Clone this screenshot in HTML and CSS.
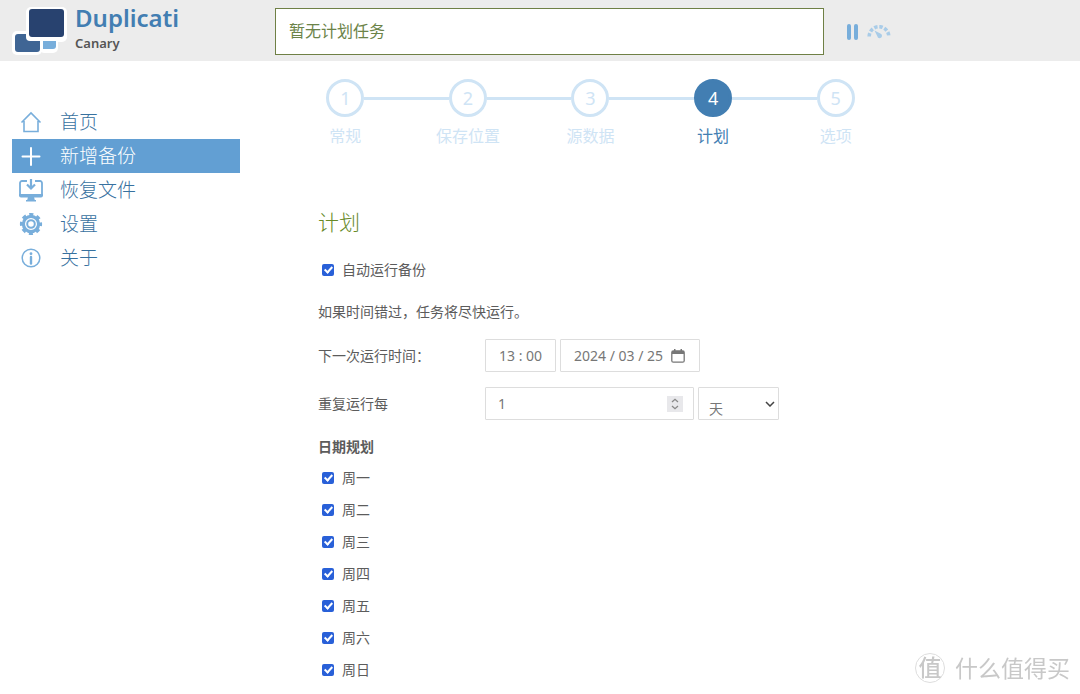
FILE: index.html
```html
<!DOCTYPE html>
<html lang="zh-CN">
<head>
<meta charset="utf-8">
<meta name="viewport" content="width=device-width, initial-scale=1">
<title>Duplicati</title>
<link rel="stylesheet" href="styles.css">
</head>
<body>
<header class="topbar">
  <a class="brand" href="#">
    <svg class="brand-logo" viewBox="0 0 56 50" aria-hidden="true">
      <g fill="#fff"><rect x="0" y="24" width="30" height="24" rx="5"/><rect x="27" y="27" width="19" height="19" rx="5"/><rect x="14" y="0" width="41" height="35" rx="5"/></g>
      <rect x="3" y="27" width="25" height="18" rx="3" fill="#3f6594"/>
      <path d="M31 29h13v10a3 3 0 0 1-3 3H31z" fill="#78aedb"/>
      <rect x="14" y="20" width="40" height="14" rx="4" fill="#fff"/>
      <rect x="17" y="2" width="35" height="28" rx="3" fill="#28426f"/>
    </svg>
    <span class="brand-text"><span class="brand-name">Duplicati</span><span class="brand-channel">Canary</span></span>
  </a>
  <div class="status">暂无计划任务</div>
  <div class="controls">
    <button class="icon-button" type="button" aria-label="暂停">
      <svg width="12" height="16" viewBox="0 0 12 16"><rect x="0" y="0" width="4" height="16" rx="2" fill="#78aedb"/><rect x="7" y="0" width="4" height="16" rx="2" fill="#78aedb"/></svg>
    </button>
    <button class="icon-button" type="button" aria-label="限速">
      <svg width="24" height="14" viewBox="0 0 24 14"><path d="M2.200 11.500A9.600 9.600 0 0 1 21.800 11.500" fill="none" stroke="#a9cce8" stroke-width="3.600" stroke-dasharray="3.400 1.800"/><path d="M7.500 5.500l5.800 3a2.400 2.400 0 1 1-3 2.800z" fill="#a9cce8"/></svg>
    </button>
  </div>
</header>
<div class="page">
  <nav class="menu">
    <a class="menu-item" href="#"><svg class="menu-icon" viewBox="0 0 26 26"><path d="M3.500 13.500L13 4l9.500 9.500M6 12v10.500h14V12" fill="none" stroke="#78aedb" stroke-width="1.600"/></svg>首页</a>
    <a class="menu-item active" href="#"><svg class="menu-icon" viewBox="0 0 26 26"><path d="M13 5v17M4.500 13.500h17" stroke="#fff" stroke-width="2" stroke-linecap="round"/></svg>新增备份</a>
    <a class="menu-item" href="#"><svg class="menu-icon" viewBox="0 0 26 26"><path d="M9 4H4a2 2 0 0 0-2 2v12h22V6a2 2 0 0 0-2-2h-5" fill="none" stroke="#78aedb" stroke-width="1.800"/><path d="M1 17h24v1.500a2 2 0 0 1-2 2H3a2 2 0 0 1-2-2zM10 20h6l.8 3H18v1.500H8V23h1.200z" fill="#78aedb"/><path d="M13 2v9M9 7.500l4 4 4-4" fill="none" stroke="#78aedb" stroke-width="2.200"/></svg>恢复文件</a>
    <a class="menu-item" href="#"><svg class="menu-icon" viewBox="0 0 26 26"><circle cx="13" cy="13" r="7.600" fill="none" stroke="#78aedb" stroke-width="3.200"/><circle cx="13" cy="13" r="9.600" fill="none" stroke="#78aedb" stroke-width="3" stroke-dasharray="4.040 3.500" stroke-dashoffset="2.020"/><circle cx="13" cy="13" r="3.800" fill="none" stroke="#78aedb" stroke-width="2"/></svg>设置</a>
    <a class="menu-item" href="#"><svg class="menu-icon" viewBox="0 0 26 26"><circle cx="13" cy="13" r="8.800" fill="none" stroke="#78aedb" stroke-width="1.500"/><circle cx="13" cy="8.700" r="1.400" fill="#78aedb"/><path d="M13 12v6.500" stroke="#78aedb" stroke-width="2.400" stroke-linecap="round"/></svg>关于</a>
  </nav>
  <main class="content">
    <ol class="steps">
      <li class="step"><span class="step-number">1</span><span class="step-label">常规</span></li>
      <li class="step"><span class="step-number">2</span><span class="step-label">保存位置</span></li>
      <li class="step"><span class="step-number">3</span><span class="step-label">源数据</span></li>
      <li class="step current"><span class="step-number">4</span><span class="step-label">计划</span></li>
      <li class="step"><span class="step-number">5</span><span class="step-label">选项</span></li>
    </ol>
    <form class="schedule">
      <h1 class="title">计划</h1>
      <label class="check auto"><input class="tick" type="checkbox" checked>自动运行备份</label>
      <p class="hint">如果时间错过，任务将尽快运行。</p>
      <div class="row">
        <label class="row-label" for="time">下一次运行时间：</label>
        <div class="fields">
          <input class="field time" id="time" type="text" value="13 : 00">
          <span class="field date">
            <input class="bare" type="text" aria-label="日期" value="2024 / 03 / 25">
            <button class="icon-button" type="button" aria-label="选择日期"><svg width="14" height="14" viewBox="0 0 14 14"><rect x=".8" y="2" width="12.400" height="11.200" rx="1.500" fill="none" stroke="#777" stroke-width="1.300"/><path d="M1 2h12v3H1zM3 0h1.500v2H3zM9.500 0H11v2H9.500z" fill="#777"/></svg></button>
          </span>
        </div>
      </div>
      <div class="row">
        <label class="row-label" for="repeat">重复运行每</label>
        <div class="fields">
          <span class="field repeat">
            <input class="bare" id="repeat" type="number" value="1">
            <button class="spinner" type="button" aria-label="调整数值"><svg width="10" height="12" viewBox="0 0 10 12"><path d="M2 4l3-2.700L8 4M2 8l3 2.700L8 8" fill="none" stroke="#888" stroke-width="1.300"/></svg></button>
          </span>
          <span class="select-wrap">
            <select class="field unit" aria-label="单位"><option>天</option></select>
            <svg class="chevron" width="10" height="6" viewBox="0 0 10 6"><path d="M1 1l4 4 4-4" fill="none" stroke="#444" stroke-width="1.500"/></svg>
          </span>
        </div>
      </div>
      <fieldset class="days">
        <legend class="days-title">日期规划</legend>
        <label class="check"><input class="tick" type="checkbox" checked>周一</label>
        <label class="check"><input class="tick" type="checkbox" checked>周二</label>
        <label class="check"><input class="tick" type="checkbox" checked>周三</label>
        <label class="check"><input class="tick" type="checkbox" checked>周四</label>
        <label class="check"><input class="tick" type="checkbox" checked>周五</label>
        <label class="check"><input class="tick" type="checkbox" checked>周六</label>
        <label class="check"><input class="tick" type="checkbox" checked>周日</label>
      </fieldset>
    </form>
  </main>
</div>
<div class="watermark"><span class="watermark-badge">值</span>什么值得买</div>
</body>
</html>
```
FILE: styles.css
```css
*, *::before, *::after { box-sizing: border-box; }
body {
  margin: 0;
  background: #fff;
  color: #5c5c5c;
  font: 14px/20px "Noto Sans", "Noto Sans CJK SC", sans-serif;
}
a { color: inherit; text-decoration: none; }
.topbar {
  display: flex;
  align-items: center;
  height: 61px;
  padding: 2px 12px 0;
  background: #ececec;
}
.brand { display: flex; gap: 7px; width: 263px; }
.brand-logo { width: 56px; height: 50px; }
.brand-text { display: flex; flex-direction: column; font-weight: 600; }
.brand-name { color: #427eb2; font-size: 24px; line-height: 22px; }
.brand-channel { color: #555; font-size: 13px; line-height: 28px; }
.status {
  flex: 0 1 549px;
  height: 47px;
  padding: 0 13px;
  border: 1px solid #6f8045;
  background: #fff;
  color: #6b8348;
  font-size: 16px;
  line-height: 44px;
}
.controls { display: flex; align-items: center; gap: 8px; padding-left: 23px; }
.icon-button { display: flex; padding: 0; border: 0; background: none; }
.page { display: flex; padding: 0 12px; }
.menu { width: 228px; padding-top: 44px; }
.menu-item {
  display: flex;
  align-items: center;
  gap: 16px;
  height: 34px;
  padding-left: 6px;
  color: #37719f;
  font-size: 19px;
  font-weight: 300;
}
.menu-item.active { background: #629fd3; color: #fff; }
.menu-icon { width: 26px; height: 26px; }
.content { flex: 1; padding: 18px 0 0 44px; }
.steps {
  display: grid;
  grid-template-columns: repeat(5, 1fr);
  max-width: 613px;
  margin: 0;
  padding: 0;
  list-style: none;
}
.step {
  display: grid;
  grid-template-columns: 1fr 38px 1fr;
  align-items: center;
  row-gap: 9px;
  color: #cfe4f5;
  font-size: 16px;
  text-align: center;
}
.step::before, .step::after { content: ""; grid-row: 1; height: 3px; background: #cfe4f5; }
.step::before { grid-column: 1; }
.step::after { grid-column: 3; }
.step:first-child::before, .step:last-child::after { background: none; }
.step-number {
  grid-column: 2;
  grid-row: 1;
  height: 38px;
  border: 3px solid #cfe4f5;
  border-radius: 50%;
  font-size: 18px;
  line-height: 32px;
}
.step-label { grid-column: 1 / -1; grid-row: 2; }
.current { color: #427eb2; }
.current .step-number { border-color: #427eb2; background: #427eb2; color: #fff; }
.schedule { padding: 62px 0 0 34px; }
.title { margin: 0; color: #688a28; font-size: 21px; font-weight: 300; line-height: 28px; }
.check { display: flex; align-items: center; gap: 8px; padding-left: 4px; }
.auto { margin-top: 24px; }
.tick {
  width: 12px;
  height: 12px;
  margin: 0;
  appearance: none;
  border-radius: 2px;
  background: #2960d8;
}
.tick:checked::after {
  content: "";
  display: block;
  width: 5px;
  height: 8px;
  margin: 1px 0 0 4px;
  border: solid #fff;
  border-width: 0 2px 2px 0;
  transform: rotate(42deg);
}
.hint { margin: 22px 0 17px; }
.row { display: flex; align-items: center; margin-bottom: 15px; }
.row-label { width: 167px; }
.fields { display: flex; gap: 4px; }
.field {
  display: flex;
  align-items: center;
  height: 33px;
  padding: 0 14px;
  border: 1px solid #ddd;
  border-radius: 1px;
  background: #fff;
  color: #777;
  font: inherit;
}
.time { width: 71px; padding: 0 10px 0 13px; }
.date { width: 140px; padding: 0 14px 0 13px; }
.repeat { width: 209px; padding: 0 10px 0 12px; }
.bare {
  flex: 1;
  min-width: 0;
  padding: 0;
  border: 0;
  background: none;
  color: inherit;
  font: inherit;
  appearance: textfield;
}
.bare::-webkit-inner-spin-button { appearance: none; }
.spinner { display: flex; padding: 2px 3px; border: 0; background: #e8e8eb; }
.select-wrap { position: relative; }
.unit { width: 81px; padding: 10px 10px 0; appearance: none; }
.chevron { position: absolute; right: 4px; top: 14px; pointer-events: none; }
.days { display: grid; gap: 12px; margin: 17px 0 0; padding: 0; border: 0; }
.days-title { padding: 0; margin-bottom: 11px; font-weight: 700; }
.watermark {
  position: fixed;
  right: 10px;
  bottom: 10px;
  display: flex;
  align-items: center;
  gap: 10px;
  color: #c8c8c8;
  font-size: 23px;
  line-height: 32px;
}
.watermark-badge {
  width: 30px;
  height: 30px;
  border: 1px solid #ddd;
  border-radius: 50%;
  font-weight: 500;
  line-height: 27px;
  text-align: center;
}
```
